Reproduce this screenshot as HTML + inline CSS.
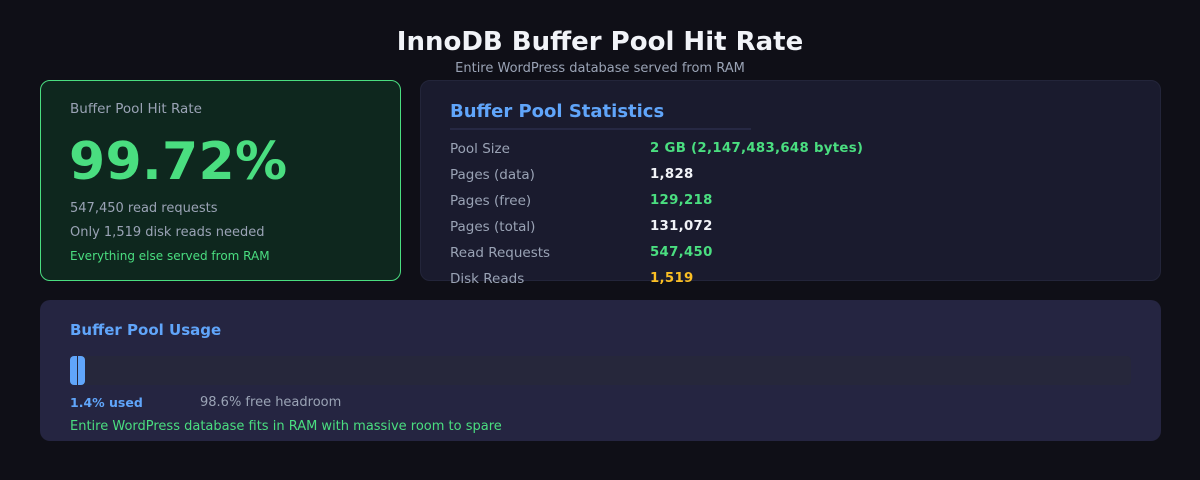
<!DOCTYPE html>
<html><head><meta charset="utf-8"><style>
*{margin:0;padding:0;box-sizing:border-box}
body{width:1200px;height:480px;background:#0f0f17;font-family:"DejaVu Sans","Liberation Sans",sans-serif;position:relative;overflow:hidden}
.a{position:absolute;white-space:nowrap}
</style></head><body>
<div class="a" style="left:0;width:1200px;top:27px;text-align:center;color:#f1f3f8;font-size:26px;font-weight:bold">InnoDB Buffer Pool Hit Rate</div>
<div class="a" style="left:0;width:1200px;top:61px;text-align:center;color:#9aa3b5;font-size:13px">Entire WordPress database served from RAM</div>

<div class="a" style="left:40px;top:80px;width:361px;height:201px;background:#0e271e;border:1px solid #4ade80;border-radius:10px"></div>
<div class="a" style="left:70px;top:101px;color:#9aa3b5;font-size:13.5px">Buffer Pool Hit Rate</div>
<div class="a" style="left:69px;top:132px;color:#4ade80;font-size:52px;font-weight:bold;letter-spacing:0.3px">99.72%</div>
<div class="a" style="left:70px;top:201px;color:#9aa3b5;font-size:13px">547,450 read requests</div>
<div class="a" style="left:70px;top:225px;color:#9aa3b5;font-size:13px">Only 1,519 disk reads needed</div>
<div class="a" style="left:70px;top:249px;color:#4ade80;font-size:12px">Everything else served from RAM</div>

<div class="a" style="left:420px;top:80px;width:741px;height:201px;background:#1a1b2e;border:1px solid #23253a;border-radius:10px"></div>
<div class="a" style="left:450px;top:101px;color:#60a5fa;font-size:18px;font-weight:bold">Buffer Pool Statistics</div>
<div class="a" style="left:450px;top:128px;width:301px;height:2px;background:#262843"></div>
<div class="a" style="left:450px;top:136px;color:#9aa3b5;font-size:13.5px;line-height:26px">Pool Size<br>Pages (data)<br>Pages (free)<br>Pages (total)<br>Read Requests<br>Disk Reads</div>
<div class="a" style="left:650px;top:136px;font-size:13.3px;font-weight:bold;line-height:26px;letter-spacing:0.3px"><span style="color:#4ade80">2 GB (2,147,483,648 bytes)</span><br><span style="color:#f1f3f8">1,828</span><br><span style="color:#4ade80">129,218</span><br><span style="color:#f1f3f8">131,072</span><br><span style="color:#4ade80">547,450</span><br><span style="color:#fbbf24">1,519</span></div>

<div class="a" style="left:40px;top:300px;width:1121px;height:141px;background:#252541;border-radius:10px"></div>
<div class="a" style="left:70px;top:321px;color:#60a5fa;font-size:15px;font-weight:bold">Buffer Pool Usage</div>
<div class="a" style="left:70px;top:356px;width:1061px;height:29px;background:#26273b;border-radius:4px"></div>
<div class="a" style="left:70px;top:356px;width:7px;height:29px;background:#60a5fa;border-radius:4px 0 0 4px"></div>
<div class="a" style="left:78px;top:356px;width:7px;height:29px;background:#60a5fa;border-radius:0 4px 4px 0"></div>
<div class="a" style="left:70px;top:395px;color:#60a5fa;font-size:12.5px;font-weight:bold">1.4% used</div>
<div class="a" style="left:200px;top:395px;color:#9aa3b5;font-size:13px">98.6% free headroom</div>
<div class="a" style="left:70px;top:419px;color:#4ade80;font-size:13px">Entire WordPress database fits in RAM with massive room to spare</div>
</body></html>
